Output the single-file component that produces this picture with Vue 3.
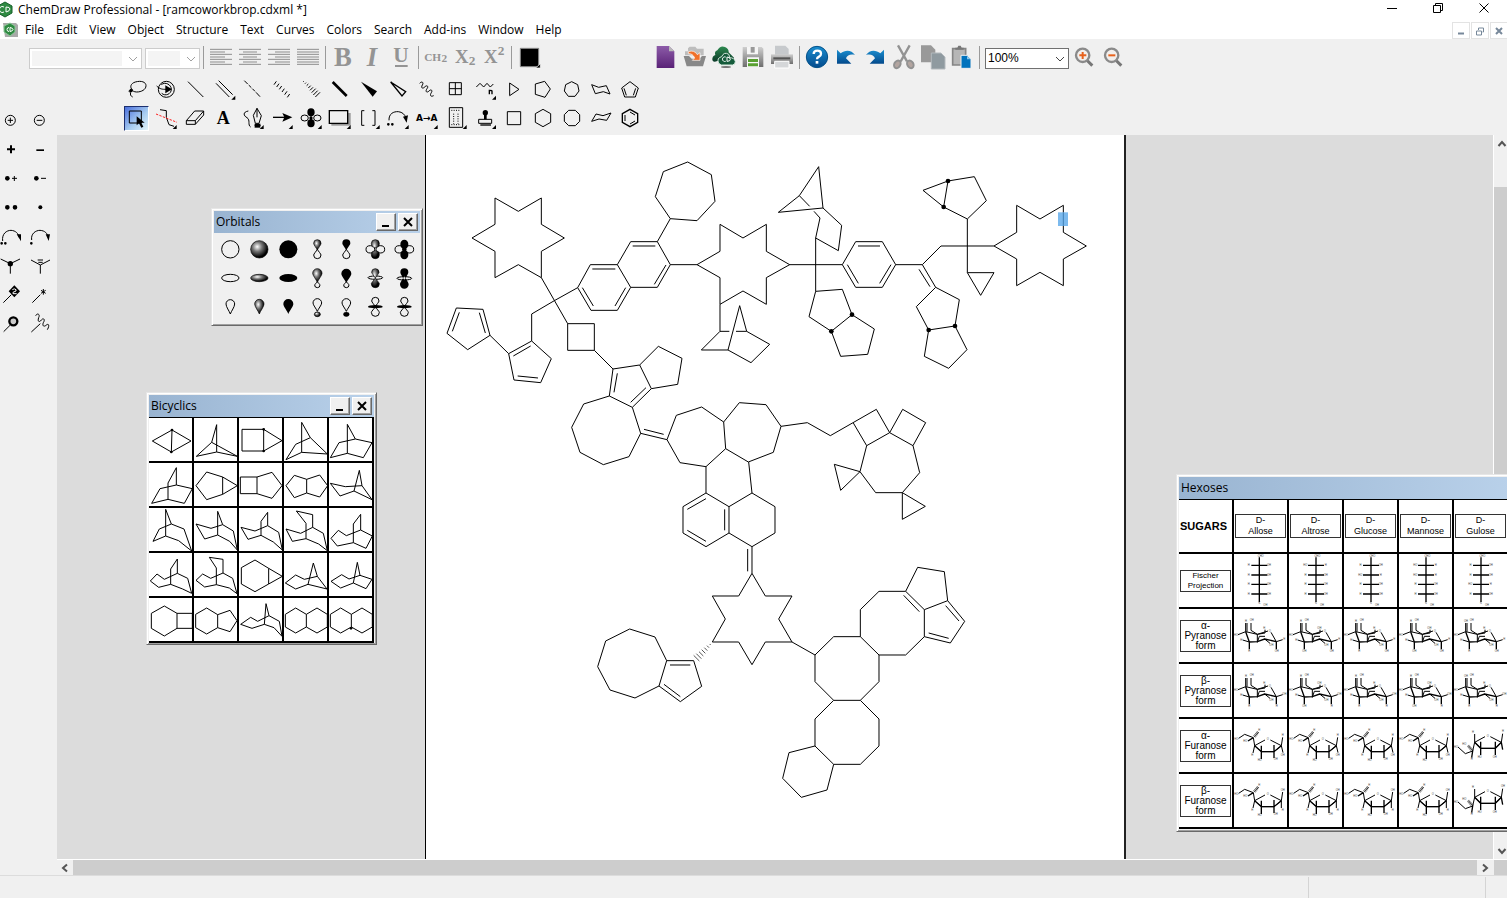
<script setup>
const circ = (x, y, r, ry = r) =>
  `M${x - r},${y}a${r},${ry} 0 1 0 ${2 * r},0a${r},${ry} 0 1 0 ${-2 * r},0Z`
const poly = (x, y, r, n, turn = -90) =>
  'M' + Array.from({ length: n }, (_, i) => {
    const a = ((turn + (360 / n) * i) * Math.PI) / 180
    return `${Math.round(x + r * Math.cos(a))},${Math.round(y + r * Math.sin(a))}`
  }).join('L') + 'Z'
const more = (x, y) => [`M${x},${y}v12h-12Z`, 'f']

const menus = ['File', 'Edit', 'View', 'Object', 'Structure', 'Text', 'Curves', 'Colors', 'Search', 'Add-ins', 'Window', 'Help']

const aligns = [
  { n: 'Align left', x: 618, p: [['M630,148h66M630,156h45M630,163h66M630,171h45M630,178h66M630,186h45M630,193h66', 'gl']] },
  { n: 'Center', x: 705, p: [['M717,148h66M729,156h42M717,163h66M729,171h42M717,178h66M729,186h42M717,193h66', 'gl']] },
  { n: 'Align right', x: 792, p: [['M804,148h66M825,156h45M804,163h66M825,171h45M804,178h66M825,186h45M804,193h66', 'gl']] },
  { n: 'Justify', x: 879, p: [['M891,148h66M891,156h66M891,163h66M891,171h66M891,178h66M891,186h66M891,193h66', 'gl']] }
]

const rowA = [
  { n: 'Lasso', p: [['M398,270C388,262 392,250 406,246C424,241 438,246 438,257C438,269 424,276 410,276C402,276 397,272 392,268C386,272 386,276 392,278C390,284 392,288 398,291', 's'], [circ(393, 272, 5), 'f']] },
  { n: 'Structure perspective', p: [[circ(499, 268, 24), 's'], ['M484,254C496,244 514,254 514,268C514,282 496,290 485,280', 's'], ['M470,258C480,268 488,268 498,268', 'm'], ['M496,256L516,268L496,280Z', 'f']] },
  { n: 'Solid bond', p: [['M564,245L610,291', 'm']] },
  { n: 'Multiple bond', p: [['M648,250L688,291M656,242L698,284', 'm'], more(706, 287)] },
  { n: 'Dashed bond', p: [['M733,242l10,10M746,255l8,8M757,266l8,8M768,277l12,13', 'm']] },
  { n: 'Hashed bond', p: [['M822,254l7,-10M830,261l7,-10M838,268l7,-10M846,276l7,-10M854,284l7,-10M862,292l7,-10', 'm']] },
  { n: 'Hashed wedge', p: [['M909,246l2,-2M915,251l3,-3M920,257l5,-5M925,264l7,-7M930,271l9,-9M935,278l12,-12M940,285l13,-13M946,291l14,-14', 's']] },
  { n: 'Bold bond', z: 1, p: [['M38,246L80,288', 'b']] },
  { n: 'Bold wedge', z: 1, p: [['M123,245L171,274L158,290Z', 'f']] },
  { n: 'Hollow wedge', z: 1, p: [['M212,246L257,275L246,288Z', 'mk']] },
  { n: 'Wavy bond', z: 1, p: [['M299,250C306,242 312,248 307,255C302,264 308,268 315,260C322,254 326,260 321,266C315,274 320,280 327,273C334,266 338,272 334,278C328,287 333,291 341,287', 's']] },
  { n: 'Table', z: 1, p: [['M388,248h36v36h-36ZM406,248v36M388,266h36', 'm']] },
  { n: 'Acyclic chain', z: 1, p: [['M469,261L480,250L491,261L501,250L511,261L520,252', 's'], ['M508,283v-14M508,273q5,-4 8,0v10', 'mk'], more(528, 287)] },
  { n: 'Cyclopropane ring', z: 1, p: [['M569,249L597,268L569,287Z', 'm']] },
  { n: 'Cyclopentane ring', z: 1, p: [['M646,252L674,244L691,267L675,292L646,283Z', 's']] },
  { n: 'Cycloheptane ring', z: 1, p: [[poly(755, 268, 23, 7), 's']] },
  { n: 'Chair cyclohexane', z: 1, p: [['M815,254L836,262L859,257L870,282L850,275L826,281Z', 's']] },
  { n: 'Cyclopentadiene ring', z: 1, p: [['M930,245L955,264L946,291H914L905,264Z', 's'], ['M912,265L919,286M947,265L940,286', 's']] }
]
const rowB = [
  { n: 'Marquee', on: true, p: [['M388,333h36v36h-36Z', 'm'], ['M410,349v27l7,-6l7,13l6,-3l-6,-12h10Z', 'f']] },
  { n: 'Fragment', p: [['M480,329L499,332V352L507,374L522,379', 'm'], ['M468,342L531,367', 'r'], more(530, 375)] },
  { n: 'Eraser', p: [['M559,362L584,333H611L586,362ZM559,362V373H586L611,345V333M586,362V373', 'm']] },
  { n: 'Text', t: [670, 373, 54, 'A', 'ser'], p: [] },
  { n: 'Pen', p: [['M745,333C728,336 730,347 741,353C752,360 742,375 752,381', 's'], ['M771,325L760,346L766,370H777L784,347ZM771,325V352M764,376h18', 'm'], ['M764,371h17v12h-17Z', 'f'], more(791, 375)] },
  { n: 'Arrow', p: [['M819,352H860', 'mk'], ['M847,339L877,352L847,365L853,352Z', 'f'], more(878, 375)] },
  { n: 'Orbitals', p: [[circ(914, 354, 11, 9) + circ(952, 354, 11, 9), 's'], [circ(933, 337, 11, 12) + circ(933, 370, 11, 12) + circ(933, 354, 5), 'f'], more(965, 375)] },
  { n: 'Drawing elements', z: 1, p: [['M34,339h58v38h-58Z', 'gf'], ['M28,332h55v38h-55Z', 'w'], more(92, 375)] },
  { n: 'Brackets', z: 1, p: [['M133,332H125V376H133M157,332H165V376H157', 'm'], more(179, 375)] },
  { n: 'Arc arrow', z: 1, p: [['M207,361C206,341 221,334 235,335C247,336 255,344 258,354', 's'], ['M264,346L260,368L249,350Z', 'f'], [circ(205, 373, 4) + circ(217, 373, 4), 'f'], more(266, 375)] },
  { n: 'Atom mapping', z: 1, t: [320, 362, 27, 'A→A', 'san'], p: [more(353, 375)] },
  { n: 'TLC plate', z: 1, p: [['M388,323h40v59h-40Z', 'm'], ['M394,331h28M394,374h28', 'dt'], ['M401,341v30M414,341v30', 'dt'], more(440, 375)] },
  { n: 'Templates', z: 1, p: [[circ(496, 338, 8), 'f'], ['M492,340h8v18h-8Z', 'f'], ['M476,358h39v12h-39Z', 'm'], ['M481,375h32', 'mk'], more(528, 375)] },
  { n: 'Cyclobutane ring', z: 1, p: [['M562,335h40v39h-40Z', 'm']] },
  { n: 'Cyclohexane ring', z: 1, p: [[poly(669, 354, 26, 6), 'm']] },
  { n: 'Cyclooctane ring', z: 1, p: [[poly(756, 354, 25, 8, 22.5), 's']] },
  { n: 'Chair cyclohexane 2', z: 1, p: [['M815,364L828,342L849,347L873,339L860,361L837,357Z', 's']] },
  { n: 'Benzene ring', z: 1, p: [[poly(930, 354, 26, 6), 'mk'], ['M915,345V363M930,336L945,345M945,363L930,372', 's']] }
]
const vbA = (i, z, y) => `${366 + 87 * i - (z ? 960 : 0)} ${y} 87 87`

const left = [
  ['Circle plus', 'M31,61m-8,0h16M31,53v16', circ(31, 61, 15)], ['Circle minus', 'M110,61h17', circ(118, 61, 15)],
  ['Plus', '', '', 'M21,145h9v-9h6v9h9v6h-9v9h-6v-9h-9Z'], ['Minus', '', '', 'M109,148h23v5h-23Z'],
  ['Radical cation', 'M36,235h15M43,228v15', '', circ(22, 235, 7)], ['Radical anion', 'M123,235h15', '', circ(109, 235, 7)],
  ['Lone pair', '', '', circ(22, 322, 7) + circ(45, 322, 7)], ['Radical', '', '', circ(121, 322, 6)],
  ['Lone pair arrow', '', 'M8,423C5,401 20,391 33,391C47,392 55,400 57,412', 'M50,403h13v21Z' + circ(5, 430, 4) + circ(16, 430, 4)],
  ['Radical arrow', '', 'M95,420C92,401 107,391 120,391C135,392 142,400 145,412', 'M137,403h13l-4,20Z' + circ(94, 430, 4)],
  ['Attachment point', 'M31,491V521', 'M2,477L31,491L60,477', circ(31, 491, 8)],
  ['Alkene', 'M121,495V521M113,480h16M115,487h13', 'M93,480L121,495L150,480'],
  ['Stereo mark', '', 'M10,608L34,584', 'M43,556l17,18l-17,18l-17,-18Z'],
  ['Star mark', 'M130,567v17M123,571l14,9M137,571l-14,9', 'M97,608L121,584'],
  ['Bead', '', 'M11,695L31,675', ''],
  ['Polymer bond', '', 'M94,696L121,671M107,647C113,637 121,644 116,653C112,664 117,669 124,660C131,652 136,659 130,668C126,678 132,681 138,676C147,668 149,678 142,689', '']
]
const vbL = i => `${-12 + 87 * (i % 2)} ${15 + 87 * Math.floor(i / 2) + 3} 87 87`

const pear = (x, y, w, h) => `M${x},${y}C${x - 3},${y - h / 5} ${x - w},${y - h / 2} ${x - w},${y - h + w}a${w},${w} 0 0 1 ${2 * w},0C${x + w},${y - h / 2} ${x + 3},${y - h / 5} ${x},${y}Z`
const pearD = (x, y, w, h) => `M${x},${y}C${x - 3},${y + h / 5} ${x - w},${y + h / 2} ${x - w},${y + h - w}a${w},${w} 0 0 0 ${2 * w},0C${x + w},${y + h / 2} ${x + 3},${y + h / 5} ${x},${y}Z`
const orbitals = [
  [[circ(75, 147, 26), 's']],
  [[circ(162, 147, 26), 'o']],
  [[circ(249, 147, 27), 'f']],
  [[pear(336, 149, 11, 31), 'o'], [pearD(336, 147, 11, 28), 's']],
  [[pear(423, 150, 12, 33), 'f'], [pearD(423, 147, 11, 28), 's']],
  [[circ(495, 147, 13, 11) + circ(525, 147, 13, 11), 's'], [circ(510, 130, 12, 12) + circ(510, 163, 12, 12), 'o']],
  [[circ(582, 147, 13, 11) + circ(612, 147, 13, 11), 's'], [circ(597, 132, 12, 14) + circ(597, 163, 12, 14) + circ(597, 147, 7), 'f']],
  [[circ(75, 233, 26, 11), 's']],
  [[circ(162, 233, 26, 11), 'o']],
  [[circ(249, 233, 27, 12), 'f']],
  [[pear(336, 246, 14, 41), 'o'], [pearD(336, 244, 8, 18), 's']],
  [[pear(423, 248, 15, 43), 'f'], [pearD(423, 244, 8, 18), 's']],
  [[circ(510, 232, 22, 5), 's'], [pear(510, 233, 11, 28) + pearD(510, 233, 12, 29), 'o']],
  [[circ(597, 234, 22, 5), 's'], [pear(597, 240, 12, 36) + pearD(597, 226, 13, 39), 'f']],
  [[pear(75, 341, 13, 43), 's']],
  [[pear(162, 341, 14, 44), 'o']],
  [[pear(249, 341, 15, 45), 'f']],
  [[pear(336, 333, 13, 38), 's'], [circ(336, 342, 9, 7), 'o']],
  [[pear(423, 333, 13, 38), 's'], [circ(423, 342, 9, 7), 'f']],
  [[pear(510, 319, 11, 28) + pearD(510, 319, 12, 29), 's'], [circ(510, 319, 22, 5), 'f']],
  [[pear(597, 319, 11, 28) + pearD(597, 319, 12, 29), 's'], [circ(597, 319, 22, 5), 'f']]
].map((p, i) => ({ p, vb: `${32 + 87 * (i % 7)} ${104 + 87 * Math.floor(i / 7)} 87 87` }))

const bicyclics = [
  ['M37,156L96,123L153,156L94,189ZM96,123L94,189', [[96, 123], [94, 189]]],
  ['M169,202L215,160L230,107V189L169,202M215,160L292,202L230,189'],
  ['M306,121H371L426,155L371,186H306ZM371,121V186', [[371, 121], [371, 186]]],
  ['M438,212L467,166L511,146L485,100V190L438,212M511,146L562,195L485,190'],
  ['M571,206L597,161L646,150L622,106V193L571,206M646,150L696,161L670,206L622,193'],
  ['M35,343L60,299L109,288V236L84,282V331L35,343M109,288L157,299L133,343L84,331'],
  ['M168,290L200,249L248,264V316L200,332ZM248,264L292,290L248,316'],
  ['M301,264H351V314H301ZM351,264L396,250L426,290L396,328L351,314'],
  ['M438,290L463,259L500,271V312L463,326ZM500,271L539,258L563,290L539,324L500,312'],
  ['M571,283L616,293L666,290L658,244L642,306L600,321ZM666,290L696,332L642,306'],
  ['M39,457L58,420L94,405L77,361V441L39,457M94,405L132,420L155,486L116,455L77,441'],
  ['M168,405L213,418L248,407L233,367V438L194,450ZM248,407L280,426L292,483L269,457L233,438'],
  ['M303,415L345,426L383,410V370L363,397V439L324,451ZM383,410L416,430L427,483L400,459L363,439'],
  ['M438,420L482,433L518,415V377L469,366L498,403V449L457,457ZM518,415L550,433L562,485L536,465L498,449'],
  ['M573,448L595,424L619,440L662,423V376L640,405V461L592,471ZM662,423L697,441L678,478L640,461'],
  ['M31,576L51,555L73,571L112,553V510L92,540V586L56,595ZM112,553L143,568L155,613L128,600L92,586'],
  ['M168,574L188,555L212,568L249,552V511L208,505L229,537V587L194,594ZM249,552L278,568L291,614L268,597L229,587'],
  ['M304,536L345,513L386,538V585L345,608L304,585ZM386,538L427,562L386,585'],
  ['M436,582L467,558L493,571L532,562L520,522L504,586L467,600ZM532,562L561,600L504,586'],
  ['M573,577L605,557L627,570L660,559L652,520L640,582L602,597ZM660,559L696,571L678,599L640,582'],
  ['M34,673L73,651L111,673V718L73,741L34,718ZM111,673H157V718H111'],
  ['M167,676L200,657L233,677V716L200,735L167,716ZM233,677L270,664L291,695L270,728L233,716'],
  ['M302,706L332,685L353,697L387,680L378,644L373,706L336,718ZM387,680L418,697L426,742L402,716L373,706'],
  ['M436,676L467,657L499,676V714L467,732L436,714ZM499,676L531,657L562,676V714L531,732L499,714'],
  ['M571,676L602,657L634,676V714L602,732L571,714ZM634,676L666,657L697,676V714L666,732L634,714', [[633, 718]]]
].map((c, i) => ({ d: c[0], dots: c[1] || [], vb: `${27 + 135 * (i % 5)} ${87 + 135 * Math.floor(i / 5)} 129 129` }))

const sugars = [
  { n: 'Allose', x: 76, l: [0, 0, 0, 0], s: ['H', 'OH', 'H'] },
  { n: 'Altrose', x: 81, l: [1, 0, 0, 0], s: ['H', 'OH', 'OH'] },
  { n: 'Glucose', x: 81, l: [0, 1, 0, 0], s: ['H', 'OH', 'H'] },
  { n: 'Mannose', x: 81, l: [1, 1, 0, 0], s: ['H', 'OH', 'OH'] },
  { n: 'Gulose', x: 81, l: [0, 0, 1, 0], s: ['OH', 'OH', 'H'] }
]
const forms = [
  { g: 'α', n: 'Pyranose', up: false }, { g: 'β', n: 'Pyranose', up: true },
  { g: 'α', n: 'Furanose', up: false }, { g: 'β', n: 'Furanose', up: true }
]
const fur = {
  line: 'M14,58L32,46L58,56M58,56L62,80L93,63M109,63L142,80M62,80L57,102M62,80L82,98H120L142,80',
  bold: 'M62,80L82,98H120L142,80M58,56L42,66M82,80V120M120,78V117',
  hash: 'M61,53L73,38'
}
const fur2 = {
  line: 'M12,84L34,104L56,96L62,70L93,53M109,53L142,70M62,70V45M62,70L80,88H124L142,70',
  bold: 'M62,70L80,88H124L142,70M56,96L53,116M80,68V108M124,68V108M142,70L146,92',
  hash: 'M56,96L42,80'
}

const drawA = [
  'M235,184L304,144V223L373,264L304,304V383L235,344L165,383V304L96,264L165,223V144Z',
  'M304,383L383,521H463V601H383V521M463,601L519,657M413,413L343,452L275,492V573',
  'M275,573L334,626L302,698L222,690L206,611ZM220,618L272,588M233,678L294,684M206,611L150,556',
  'M150,556L129,478L49,474L21,550L83,599ZM118,488L136,549M58,487L37,544',
  'M413,413L451,344H532L572,412L532,481H453ZM457,357H526M427,413L460,468M557,413L525,468',
  'M532,344L572,275H652L691,344L652,412H572M578,288H646M678,345L643,403',
  'M652,275L691,206L771,212L825,154L814,74L743,36L670,65L646,140L691,206M691,344H771',
  'M909,264L979,223V304L1049,344L979,383V463L909,423L840,463V383L771,344L840,304V223ZM840,463V544',
  'M868,544H840L784,600H864L933,638L989,583L920,544L899,467L864,600M888,544H920',
  'M519,657L599,645L634,716L577,772L508,738ZM532,670L522,727M618,713L572,757',
  'M599,645L655,589L726,625L713,703L634,716',
  'M508,738L431,762L395,832L420,907L490,944L567,920L602,850L577,772M602,850L681,869M612,838L671,853',
  'M681,869L709,796L785,771L851,816L857,896L798,950L720,938Z',
  'M851,816L898,758L978,764L1023,829L1000,907L925,936L857,896'
].join('')
const drawB = [
  'M58,344H217M137,264V424M217,344L257,275H337L377,344L337,412H257ZM264,288H330M232,344L265,400M363,344L329,400',
  'M377,344H457L513,288H672M457,344L497,412M447,358L480,410',
  'M88,137L146,50L159,174L25,187ZM88,137L119,169M132,184L150,204L137,264L205,302L215,226L159,174',
  'M137,424L217,418L246,494L184,544L117,500ZM246,494L313,537L293,613L212,619L184,544',
  'M497,412L568,449L555,528L476,540L439,470ZM555,528L591,599L536,655L463,619L476,540',
  'M459,121L534,93L613,80L649,152L592,207L521,171ZM534,93L521,171M592,207V368H672L632,436L592,368',
  'M810,207L880,166V247L949,288L880,327V407L810,367L740,407V327L672,288L740,247V166Z',
  'M33,829L112,818L181,857L319,778L359,848L290,887L250,819M359,848L398,778L467,818L429,887L359,848',
  'M290,887L270,965L317,1028H397L449,968L429,887M270,965L193,943L212,1021ZM397,1028V1108L466,1069Z'
].join('')
const dotsB = [[246, 494], [184, 544], [555, 528], [476, 540], [534, 93], [521, 171]]
const drawC = [
  'M438,50V129L507,170V249L438,290L369,249V170L438,129M566,36L576,129L507,170M576,129L645,170V249L576,290L507,249',
  'M494,178V241M382,178L438,146M382,241L438,274M576,290V370M563,297V364',
  'M576,370L616,438H696L656,507L696,576H616L576,644L536,576H457L496,507L457,438H536Z',
  'M401,632H320L297,708L361,755L425,709ZM330,645H391M312,703L361,740',
  'M320,632L285,561L209,537L137,573L113,650L150,720L225,744L297,708',
  'M696,576L765,615L821,560H901L957,615V695L901,751H821L765,695V615',
  'M901,560V479L957,424H1037L1093,479V560L1037,615H957',
  'M1037,424L1073,352L1153,365L1163,452L1093,479M1163,452L1214,514L1171,579L1093,560M1031,436L1078,485M1157,467L1197,513M1106,549L1166,565',
  'M821,751L765,807V888L821,943H901L957,888V807L901,751M765,888L687,908L668,985L724,1042L801,1020L821,943'
].join('')
const drawHash = 'M449,582l3,3M441,587l6,6M433,593l9,9M425,599l11,11M417,605l13,13M409,611l15,15M401,616l17,17'
</script>

<template>
  <div class="app">
    <svg class="defs" width="0" height="0" aria-hidden="true">
      <defs>
        <radialGradient id="ball" cx=".38" cy=".35" r=".6"><stop offset="0" stop-color="#fff" /><stop offset=".45" stop-color="#777" /><stop offset="1" stop-color="#000" /></radialGradient>
        <linearGradient id="purple" x2="0" y2="1"><stop offset="0" stop-color="#8c5ba8" /><stop offset="1" stop-color="#5a2277" /></linearGradient>
        <linearGradient id="steel" x2="0" y2="1"><stop offset="0" stop-color="#cfcfcf" /><stop offset="1" stop-color="#6e6e6e" /></linearGradient>
        <linearGradient id="blue" x2="0" y2="1"><stop offset="0" stop-color="#1a8ed0" /><stop offset="1" stop-color="#034a8c" /></linearGradient>
        <linearGradient id="green" x2="0" y2="1"><stop offset="0" stop-color="#2d8a50" /><stop offset="1" stop-color="#0b3a28" /></linearGradient>
      </defs>
    </svg>

    <header class="title">
      <svg class="logo" viewBox="0 0 16 20" width="16" height="20"><path d="M5 2l7 4v7l-7 4l-7-4V6Z" fill="#2f8a42" stroke="#17602a" /><path d="M4 7a3 3 0 1 0 0 5M6 7v5q4-1 4-3t-4-2" fill="none" stroke="#fff" /></svg>
      <h1>ChemDraw Professional - [ramcoworkbrop.cdxml *]</h1>
      <div class="winbtns">
        <button aria-label="Minimize"><svg viewBox="0 0 12 12" width="12" height="12"><path d="M1 6.500h10" /></svg></button>
        <button aria-label="Restore"><svg viewBox="0 0 12 12" width="12" height="12"><path d="M1.500 3.500h7v7h-7zM3.500 3.500v-2h7v7h-2" /></svg></button>
        <button aria-label="Close"><svg viewBox="0 0 12 12" width="12" height="12"><path d="M1.500 1.500l9 9M10.500 1.500l-9 9" /></svg></button>
      </div>
    </header>

    <nav class="menu">
      <svg viewBox="0 0 18 18" width="18" height="18"><path d="M2 2h13l2 2v12H4z" fill="#a9a9a9" /><path d="M9 2l5 3v6l-5 4l-6-4V5Z" fill="#2f8a42" stroke="#8fc79a" /><path d="M8 6.500a2 2 0 1 0 0 4M9 6.500v4q3-.5 3-2t-3-2" fill="none" stroke="#fff" /></svg>
      <div class="items"><button v-for="m in menus" :key="m">{{ m }}</button></div>
      <div class="mdi">
        <button aria-label="Minimize document"><svg viewBox="0 0 10 10" width="10" height="10"><path d="M2 7.500h6" stroke-width="2" /></svg></button>
        <button aria-label="Restore document"><svg viewBox="0 0 10 10" width="10" height="10"><path d="M1.500 5h5v4h-5zM3.500 4V2h5v4h-1" /></svg></button>
        <button aria-label="Close document"><svg viewBox="0 0 10 10" width="10" height="10"><path d="M2 2l6 6M8 2l-6 6" stroke-width="2" /></svg></button>
      </div>
    </nav>

    <div class="bar">
      <div class="combo font"><select disabled aria-label="Font"><option></option></select><svg viewBox="0 0 10 10" width="10" height="10"><path d="M1 3l4 4l4-4" /></svg></div>
      <div class="combo size"><select disabled aria-label="Font size"><option></option></select><svg viewBox="0 0 10 10" width="10" height="10"><path d="M1 3l4 4l4-4" /></svg></div>
      <i class="sep"></i>
      <button v-for="a in aligns" :key="a.n" class="tool" :aria-label="a.n"><svg :viewBox="`${a.x} 129 87 87`"><path v-for="(p, k) in a.p" :key="k" :d="p[0]" :class="p[1]" /></svg></button>
      <i class="sep"></i>
      <button class="tool fmt" aria-label="Bold"><svg viewBox="24 129 87 87"><text x="69" y="197" font-size="80" font-weight="700">B</text></svg></button>
      <button class="tool fmt" aria-label="Italic"><svg viewBox="111 129 87 87"><text x="156" y="197" font-size="80" font-weight="700" font-style="italic">I</text></svg></button>
      <button class="tool fmt" aria-label="Underline"><svg viewBox="198 129 87 87"><text x="243" y="187" font-size="64" font-weight="700">U</text><path d="M225,195h38v6h-38Z" /></svg></button>
      <i class="sep"></i>
      <button class="tool fmt" aria-label="Formula"><svg viewBox="303 129 87 87"><text x="338" y="183" font-size="34" font-weight="700">CH</text><text x="373" y="186" font-size="34" font-weight="700">2</text></svg></button>
      <button class="tool fmt" aria-label="Subscript"><svg viewBox="390 129 87 87"><text x="425" y="190" font-size="56" font-weight="700">X</text><text x="456" y="195" font-size="40" font-weight="700">2</text></svg></button>
      <button class="tool fmt" aria-label="Superscript"><svg viewBox="477 129 87 87"><text x="512" y="190" font-size="56" font-weight="700">X</text><text x="543" y="164" font-size="40" font-weight="700">2</text></svg></button>
      <i class="sep"></i>
      <button class="tool" aria-label="Color"><svg viewBox="582 129 87 87"><path d="M601,145h55v55h-55Z" stroke="#8a8a8a" stroke-width="3" /><path d="M661,191v13h-14Z" stroke="#fff" stroke-width="2" /></svg></button>

      <button class="tool files" aria-label="New document"><svg viewBox="33 129 87 87"><path d="M50,138h37l16,16v50h-53Z" fill="url(#purple)" /><path d="M87,138v16h16Z" fill="#b9b9b9" /></svg></button>
      <button class="tool" aria-label="Open"><svg viewBox="120 129 87 87"><path d="M135,154h9v-9l5,-5h17l5,6h20v20h-56Z" fill="#bdbdbd" /><path d="M131,168h16l8,8h23l8,-8h12l-9,31h-49Z" fill="#888" /><path d="M145,155q18,-6 27,9l8,-6v23h-23l7,-7q-6,-14 -19,-13Z" fill="#f0702a" stroke="#fff" stroke-width="2" /></svg></button>
      <button class="tool" aria-label="Open from cloud"><svg viewBox="207 129 87 87"><ellipse cx="258" cy="201" rx="15" ry="3" fill="#777" /><path d="M217,180q-1,-12 9,-15q-4,-10 6,-14q9,-16 23,-10q12,6 11,16l16,16v10h-50q-13,5 -15,-3Z" fill="url(#green)" /><path d="M236,190q-7,-16 9,-20q7,-16 21,-7q3,5 2,10q16,0 18,12q0,8 -8,10h-34Z" fill="#155b3b" stroke="#d8eadf" stroke-width="3" /><path d="M257,171a7,7 0 1 0 0,13M261,171v13q10,0 10,-6t-10,-7" fill="none" stroke="#fff" stroke-width="3" /></svg></button>
      <button class="tool" aria-label="Save"><svg viewBox="294 129 87 87"><path d="M308,141h57l5,5v55h-62Z" fill="url(#steel)" /><path d="M321,141h33v22h-33ZM321,172h36v29h-36Z" fill="#f6f6f6" /><path d="M332,141h12v17h-12Z" fill="#999" /><path d="M324,177h30v9h-30ZM324,190h30v9h-30Z" fill="#58a030" /></svg></button>
      <button class="tool" aria-label="Print"><svg viewBox="381 129 87 87"><path d="M405,137h31l10,10v20h-41Z" fill="#c6c9cc" /><path d="M393,163h66v29h-66Z" fill="url(#steel)" /><path d="M400,172h51v6h-51Z" fill="#555" /><path d="M404,184h43v20h-43Z" fill="#d5d7d9" stroke="#fff" stroke-width="3" /></svg></button>
      <i class="sep"></i>
      <button class="tool" aria-label="Help"><svg viewBox="486 129 87 87"><circle cx="531" cy="171" r="32" fill="url(#blue)" stroke="#035189" stroke-width="3" /><path d="M521,162q0,-10 11,-10t11,9q0,6 -6,9t-6,8" fill="none" stroke="#fff" stroke-width="7" /><path d="M527,183h8v8h-8Z" fill="#fff" /></svg></button>
      <button class="tool" aria-label="Undo"><svg viewBox="573 129 87 87"><path d="M591,149L602,160C615,149 634,148 645,165C632,161 621,166 618,175L634,191H591Z" fill="url(#blue)" /></svg></button>
      <button class="tool" aria-label="Redo"><svg viewBox="660 129 87 87"><path d="M732,149L721,160C708,149 689,148 678,165C691,161 702,166 705,175L689,191H732Z" fill="url(#blue)" /></svg></button>
      <button class="tool" aria-label="Cut"><svg viewBox="747 129 87 87"><path d="M774,136l27,48M809,136l-27,48" stroke="#929292" stroke-width="7" /><ellipse cx="772" cy="193" rx="9" ry="12" transform="rotate(30 772 193)" fill="#b3a5a0" stroke="#929292" stroke-width="6" /><ellipse cx="811" cy="193" rx="9" ry="12" transform="rotate(-30 811 193)" fill="#b3a5a0" stroke="#929292" stroke-width="6" /></svg></button>
      <button class="tool" aria-label="Copy"><svg viewBox="834 129 87 87"><path d="M843,136h30l13,13v38h-43Z" fill="#999" /><path d="M874,159h29l12,12v36h-41Z" fill="#8f9aa0" stroke="#b3b9bd" stroke-width="3" /></svg></button>
      <button class="tool" aria-label="Paste"><svg viewBox="921 129 87 87"><path d="M938,146h39v49h-39Z" fill="#b6b6b6" stroke="#858585" stroke-width="5" /><path d="M946,149v-6h6l3,-6h7l3,6h6v6Z" fill="#777" /><path d="M963,166h19l11,11v28h-30Z" fill="#0072bd" stroke="#f0f0f0" stroke-width="3" /><path d="M981,167v11h12" fill="#8cc6ea" /></svg></button>
      <i class="sep"></i>
      <div class="combo zoom"><select aria-label="Zoom"><option>100%</option></select><svg viewBox="0 0 10 10" width="10" height="10"><path d="M1 3l4 4l4-4" /></svg></div>
      <button class="tool" aria-label="Zoom in"><svg viewBox="1287 129 87 87"><path d="M1340,180L1357,197" stroke="#777" stroke-width="9" /><circle cx="1328" cy="166" r="20" fill="#f3efec" stroke="#8a8a8a" stroke-width="7" /><path d="M1318,166h21M1328,156v21" stroke="#e8621c" stroke-width="6" /></svg></button>
      <button class="tool" aria-label="Zoom out"><svg viewBox="1374 129 87 87"><path d="M1427,180L1444,197" stroke="#777" stroke-width="9" /><circle cx="1415" cy="166" r="20" fill="#f3efec" stroke="#8a8a8a" stroke-width="7" /><path d="M1405,166h21" stroke="#e8621c" stroke-width="6" /></svg></button>
    </div>

    <div class="main">
      <aside class="left">
        <button v-for="(l, i) in left" :key="l[0]" class="tool" :aria-label="l[0]">
          <svg :viewBox="vbL(i)">
            <path v-if="l[1]" :d="l[1]" class="m" /><path v-if="l[2]" :d="l[2]" class="s" /><path v-if="l[3]" :d="l[3]" class="f" />
            <circle v-if="l[0] === 'Bead'" cx="40" cy="664" r="12" fill="#ccc" stroke="#000" stroke-width="7" />
            <path v-if="l[0] === 'Stereo mark'" d="M37,569q6,-5 11,0v4l-9,4v4h11" fill="none" stroke="#fff" stroke-width="3" />
          </svg>
        </button>
      </aside>

      <div class="right">
        <div class="tools">
          <div class="trow">
            <button v-for="(t, i) in rowA" :key="t.n" class="tool" :aria-label="t.n"><svg :viewBox="vbA(i, t.z, 225)"><path v-for="(p, k) in t.p" :key="k" :d="p[0]" :class="p[1]" /></svg></button>
          </div>
          <div class="trow">
            <button v-for="(t, i) in rowB" :key="t.n" class="tool" :class="{ on: t.on }" :aria-label="t.n">
              <svg :viewBox="vbA(i, t.z, 312)">
                <path v-for="(p, k) in t.p" :key="k" :d="p[0]" :class="p[1]" />
                <text v-if="t.t" :x="t.t[0]" :y="t.t[1]" :font-size="t.t[2]" :class="t.t[4]">{{ t.t[3] }}</text>
              </svg>
            </button>
          </div>
        </div>

        <div class="work">
          <div class="desk">
            <main class="page">
              <svg viewBox="426 135 698 724" width="698" height="724">
                <g transform="translate(440 150) scale(.33333)"><path class="s" :d="drawA" /></g>
                <g transform="translate(770 150) scale(.33333)">
                  <path class="s" :d="drawB" />
                  <circle v-for="(d, i) in dotsB" :key="i" :cx="d[0]" :cy="d[1]" r="7" />
                  <rect x="864" y="187" width="30" height="41" fill="#7cbaee" /><path d="M880,187v41" stroke="#3f7fb5" stroke-width="3" />
                </g>
                <g transform="translate(560 450) scale(.33333)"><path class="s" :d="drawC" /><path class="thin" :d="drawHash" /></g>
              </svg>
            </main>
          </div>
          <div class="vscroll">
            <button aria-label="Scroll up"><svg viewBox="0 0 10 10" width="10" height="10"><path d="M1.500 7l3.500-4l3.500 4" /></svg></button>
            <div class="track"><div class="thumb"></div></div>
            <button aria-label="Scroll down"><svg viewBox="0 0 10 10" width="10" height="10"><path d="M1.500 3l3.500 4l3.500-4" /></svg></button>
          </div>
        </div>
        <div class="hscroll">
          <button aria-label="Scroll left"><svg viewBox="0 0 10 10" width="10" height="10"><path d="M7 1.500l-4 3.500l4 3.500" /></svg></button>
          <div class="thumb"></div>
          <button aria-label="Scroll right"><svg viewBox="0 0 10 10" width="10" height="10"><path d="M3 1.500l4 3.500l-4 3.500" /></svg></button>
          <div class="corner"></div>
        </div>
      </div>

      <section class="pal orb">
        <header><h2>Orbitals</h2><button aria-label="Minimize Orbitals"><svg viewBox="0 0 16 14" width="16" height="14"><path d="M4 11h7" /></svg></button><button aria-label="Close Orbitals"><svg viewBox="0 0 16 14" width="16" height="14"><path d="M4 3l8 8M12 3l-8 8" /></svg></button></header>
        <div class="ogrid">
          <button v-for="(o, i) in orbitals" :key="i" class="tool" :aria-label="'Orbital ' + (i + 1)"><svg :viewBox="o.vb"><path v-for="(p, k) in o.p" :key="k" :d="p[0]" :class="p[1]" /></svg></button>
        </div>
      </section>

      <section class="pal bic">
        <header><h2>Bicyclics</h2><button aria-label="Minimize Bicyclics"><svg viewBox="0 0 16 14" width="16" height="14"><path d="M4 11h7" /></svg></button><button aria-label="Close Bicyclics"><svg viewBox="0 0 16 14" width="16" height="14"><path d="M4 3l8 8M12 3l-8 8" /></svg></button></header>
        <div class="bgrid">
          <button v-for="(b, i) in bicyclics" :key="i" :aria-label="'Bicyclic ' + (i + 1)"><svg :viewBox="b.vb"><path class="s" :d="b.d" /><circle v-for="(d, k) in b.dots" :key="k" :cx="d[0]" :cy="d[1]" r="4" /></svg></button>
        </div>
      </section>

      <section class="pal hex">
        <header><h2>Hexoses</h2></header>
        <table>
          <thead>
            <tr>
              <th class="sug" scope="col">SUGARS</th>
              <th v-for="s in sugars" :key="s.n" scope="col"><span class="box name">D-<br />{{ s.n }}</span></th>
            </tr>
          </thead>
          <tbody>
            <tr>
              <th scope="row"><span class="box fis">Fischer<br />Projection</span></th>
              <td v-for="s in sugars" :key="s.n">
                <svg viewBox="0 0 159 159">
                  <g :transform="`translate(${s.x} 0)`">
                    <path class="mb" d="M0,10V145M-24,34H24M-24,63H24M-24,91H24M-24,120H24" />
                    <text x="4" y="8">CHO</text><text x="18" y="155">OH</text><text x="0" y="151">C</text>
                    <template v-for="(v, k) in s.l" :key="k">
                      <text x="-32" :y="[36, 65, 93, 122][k]">{{ v ? 'HO' : 'H' }}</text><text x="29" :y="[36, 65, 93, 122][k]">{{ v ? 'H' : 'OH' }}</text>
                    </template>
                  </g>
                </svg>
              </td>
            </tr>
            <tr v-for="f in forms" :key="f.g + f.n">
              <th scope="row"><span class="box form">{{ f.g }}-<br />{{ f.n }}<br />form</span></th>
              <td v-for="(s, i) in sugars" :key="s.n">
                <svg v-if="f.n === 'Pyranose'" viewBox="0 0 159 159">
                  <path class="m" d="M35,42V68M39,42V68M51,42V64L70,76L93,72V62M70,76V100M35,68L12,77M35,68L70,76L102,66M111,70L127,98M46,99L26,93M92,90L108,103M127,98L146,92" />
                  <path class="mb" d="M35,68L46,99L70,98L92,90L127,98M46,99V121M127,98V121" />
                  <path class="s" d="M70,100L76,82L93,82" />
                  <text x="36" y="38">{{ s.s[0] }}</text><text x="53" y="36">OH</text><text x="6" y="80">HO</text><text x="91" y="60">{{ s.s[2] }}</text><text x="107" y="69">O</text>
                  <text x="22" y="96">H</text><text x="46" y="130">{{ i % 2 ? 'OH' : 'H' }}</text><text x="112" y="110">OH</text><text x="128" y="130">{{ f.up ? 'H' : 'OH' }}</text><text x="151" y="94">{{ f.up ? 'OH' : 'H' }}</text>
                </svg>
                <svg v-else-if="i < 4" viewBox="0 0 159 159">
                  <path class="m" :d="fur.line" /><path class="mb" :d="fur.bold" /><path class="ha" :d="fur.hash" />
                  <path class="m" :d="f.up ? 'M142,80L146,54M142,80V102' : 'M142,80L146,55M142,80L147,101'" />
                  <text x="7" y="62">HO</text><text x="34" y="70">HO</text><text x="76" y="37">H</text><text x="101" y="63">O</text><text x="55" y="110">H</text>
                  <text x="77" y="127">HO</text><text x="125" y="123">OH</text><text x="146" y="50">{{ f.up ? 'OH' : 'H' }}</text><text x="146" y="110">{{ f.up ? 'H' : 'OH' }}</text>
                </svg>
                <svg v-else viewBox="0 0 159 159">
                  <path class="m" :d="fur2.line" /><path class="mb" :d="fur2.bold" /><path class="ha" :d="fur2.hash" /><path class="m" d="M142,70L146,44" />
                  <text x="6" y="88">HO</text><text x="31" y="78">HO</text><text x="101" y="53">O</text><text x="57" y="42">H</text><text x="53" y="124">H</text>
                  <text x="77" y="118">HO</text><text x="122" y="117">OH</text><text x="147" y="40">{{ f.up ? 'OH' : 'H' }}</text>
                </svg>
              </td>
            </tr>
          </tbody>
        </table>
      </section>
    </div>

    <footer class="status"><span></span><i></i><b></b></footer>
  </div>
</template>

<style>
html, body { margin: 0; overflow: hidden; }
</style>

<style scoped>
* { box-sizing: border-box; }
.app { height: 100vh; display: flex; flex-direction: column; background: #f0f0f0; color: #000; font: 12px/16px "Open Sans", "Noto Sans", sans-serif; overflow: hidden; }
.defs { position: absolute; }
button { padding: 0; border: 0; background: none; font: inherit; color: inherit; display: flex; align-items: center; justify-content: center; flex: none; }
svg { display: block; overflow: visible; }
h1, h2 { font: inherit; margin: 0; white-space: nowrap; }

.title { height: 20px; flex: none; background: #fff; display: flex; align-items: center; }
.logo { margin-right: 2px; }
.winbtns { margin-left: auto; display: flex; height: 20px; }
.winbtns button { width: 46px; height: 16px; }
.winbtns path { fill: none; stroke: #000; }
.menu { height: 19px; flex: none; background: #fff; display: flex; align-items: center; }
.menu > svg { margin: 0 6px 0 1px; }
.items { display: flex; gap: 12px; height: 22px; align-items: center; }
.items button { padding-top: 1px; }
.mdi { margin-left: auto; display: flex; gap: 1px; margin-right: -1px; align-self: flex-end; }
.mdi button { width: 18px; height: 17px; border: 1px solid #e3e3e3; }
.mdi path { fill: none; stroke: #77889a; }

.bar { height: 36px; flex: none; display: flex; align-items: center; padding-left: 29px; }
.sep { width: 6px; height: 23px; flex: none; background: linear-gradient(#9a9a9a, #9a9a9a) center / 1px 100% no-repeat; }
.tool { width: 29px; height: 29px; }
.tool svg { width: 29px; height: 29px; }
.files { margin-left: 108px; }
.combo { position: relative; height: 21px; flex: none; border: 1px solid #ccc; background: #fff; margin-top: 2px; }
.combo svg { position: absolute; right: 3px; top: 5px; pointer-events: none; }
.combo path { fill: none; stroke: #a0a0a0; }
.combo select { appearance: none; border: 0; margin: 0; width: 100%; height: 19px; padding: 2px 19px 2px 2px; background: #f0f0f0 content-box; color: #000; font: 12px/15px "Open Sans", sans-serif; }
.font { width: 113px; margin-right: 3px; }
.size { width: 55px; }
.zoom { width: 84px; margin-left: 3px; border-color: #707070; }
.zoom select { background: #fff; font: 12px/15px "Liberation Sans", sans-serif; }
.zoom path { stroke: #444; }
.fmt { font-family: "Liberation Serif", serif; }
.fmt text { fill: #949494; text-anchor: middle; }
.fmt path { fill: #949494; }

.s, .m, .mb, .mk, .b, .w, .gl, .r, .dt, .ha, .thin { fill: none; stroke: #000; stroke-width: 3; }
.mb { stroke-width: 4; }
.mk { stroke-width: 4; }
.b { stroke-width: 8; }
.w { fill: #f0f0f0; stroke-width: 4; }
.f { fill: #000; }
.gf { fill: #989898; }
.gl { stroke: #8d8d8d; }
.r { stroke: #f22; stroke-dasharray: 7 4; }
.dt { stroke-dasharray: 3 4; }
.ha { stroke-width: 8; stroke-dasharray: 2 2; }
.thin { stroke-width: 2; }
.o { fill: url(#ball); stroke: #000; stroke-width: 2; }
.ser { font-family: "Liberation Serif", serif; font-weight: 700; text-anchor: middle; }
.san { font-family: "DejaVu Sans", sans-serif; font-weight: 700; text-anchor: middle; }

.main { flex: 1; min-height: 0; display: flex; position: relative; overflow: hidden; }
.left { width: 61px; margin-left: -4px; flex: none; padding: 31px 3px 0 0; display: grid; grid-template-columns: 29px 29px; grid-auto-rows: 29px; }
.right { flex: 1; min-width: 0; display: flex; flex-direction: column; }
.tools { height: 60px; flex: none; padding-left: 65px; }
.trow { display: flex; }
.on { background: linear-gradient(135deg, #4a6fdc, #a8cdf0 55%, #e8f8fa) center / 24px 24px no-repeat; position: relative; }
.on::before { content: ""; position: absolute; inset: 2px; border: 1px solid #1c2f6e; border-right-color: #fff; border-bottom-color: #fff; }
.on svg { position: relative; }
.work { flex: 1; min-height: 0; display: flex; }
.desk { flex: 1; min-width: 0; background: #dcdcdc; display: flex; justify-content: center; overflow: hidden; }
.page { width: 701px; flex: none; background: #fff; border-left: 1px solid #000; border-right: 2px solid #222; overflow: hidden; }
.vscroll { width: 14px; flex: none; border-left: 1px solid #fff; overflow: hidden; display: flex; flex-direction: column; }
.vscroll button { width: 16px; height: 17px; }
.vscroll path, .hscroll path { fill: none; stroke: #555; stroke-width: 2; }
.track { flex: 1; padding-top: 35px; }
.track .thumb { height: 90%; background: #cdcdcd; }
.hscroll { height: 16px; flex: none; display: flex; border-top: 1px solid #fff; }
.hscroll button { width: 16px; height: 15px; }
.hscroll .thumb { flex: 1; background: #cdcdcd; }
.corner { width: 13px; background: #cdcdcd; margin-left: 1px; }

.pal { position: absolute; padding: 2px; background: #f0f0f0; border: 1px solid #e6e6e6; border-right-color: #696969; border-bottom-color: #696969; box-shadow: inset 1px 1px #fff, inset -1px -1px #a0a0a0; }
.pal header { height: 22px; display: flex; align-items: center; gap: 2px; padding: 0 2px; background: linear-gradient(90deg, #99b4d1, #b9d1ea); }
.pal h2 { flex: 1; }
.pal header button { width: 20px; height: 18px; background: #f0f0f0; border: 1px solid; border-color: #fff #696969 #696969 #fff; box-shadow: inset -1px -1px #a0a0a0; }
.pal header path { fill: none; stroke: #000; stroke-width: 2; }
.orb { left: 211px; top: 133px; width: 212px; height: 118px; }
.ogrid { display: grid; grid-template-columns: repeat(7, 29px); padding: 2px; }
.bic { left: 146px; top: 317px; width: 231px; height: 253px; }
.bic header, .hex header { border-bottom: 1px solid #000; height: 23px; }
.bgrid { display: grid; grid-template-columns: repeat(5, 45px); }
.bgrid button { width: 45px; height: 45px; background: #fff; border: solid #000; border-width: 0 2px 2px 0; overflow: hidden; }
.bgrid svg { width: 43px; height: 43px; }
.hex { left: 1176px; top: 399px; right: -8px; overflow: hidden; }
table { border-collapse: separate; border-spacing: 0; width: 330px; table-layout: fixed; background: #fff; font-family: "Liberation Sans", sans-serif; }
th, td { width: 55px; height: 55px; padding: 0; border: solid #000; border-width: 0 2px 2px 0; font-weight: 400; text-align: center; overflow: hidden; }
th .box { display: block; margin: 0 1px; border: 1px solid #333; }
thead th { height: 54px; }
thead .sug { font-weight: 700; font-size: 11px; text-align: left; padding-left: 1px; }
.name { font-size: 9px; line-height: 11px; }
.fis { font-size: 8px; line-height: 10px; }
.form { font-size: 10px; line-height: 10px; }
td svg { width: 53px; height: 53px; overflow: hidden; }
td text { font-size: 8px; text-anchor: middle; fill: #333; }

.status { height: 23px; flex: none; display: flex; border-top: 1px solid #dcdcdc; }
.status span { flex: 1; }
.status i, .status b { border-left: 1px solid #d4d4d4; margin-top: 1px; }
.status i { width: 177px; }
.status b { width: 22px; }
</style>
